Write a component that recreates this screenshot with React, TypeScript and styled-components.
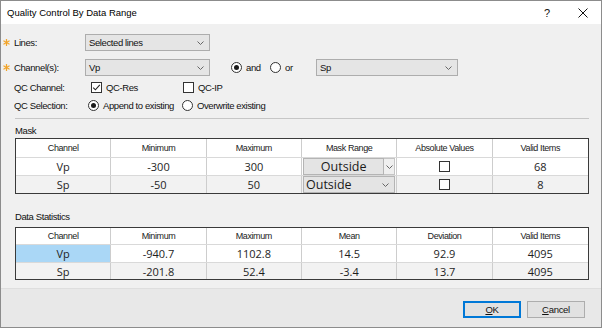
import React from "react";
import styled, { createGlobalStyle } from "styled-components";

const GlobalStyle = createGlobalStyle`
  html, body {
    margin: 0;
    padding: 0;
    background: #ffffff;
  }
  body {
    font-family: "Liberation Sans", Arial, sans-serif;
    color: #000;
  }
  * {
    box-sizing: border-box;
  }
`;

const Dialog = styled.div`
  width: 602px;
  height: 328px;
  border: 1px solid #8c8c8c;
  background: #f0f0f0;
  display: flex;
  flex-direction: column;
  overflow: hidden;
`;

const TitleBar = styled.div`
  height: 23px;
  flex: none;
  background: #ffffff;
  display: flex;
  align-items: center;
  padding-left: 6px;
  font-size: 9.5px;
`;

const Title = styled.div`
  flex: 1;
`;

const TitleButton = styled.div`
  width: 36px;
  height: 23px;
  display: flex;
  align-items: center;
  justify-content: center;
  font-size: 11px;
  color: #111;
`;

const Body = styled.div`
  flex: 1;
  padding: 10px 12px 0 2px;
  display: flex;
  flex-direction: column;
`;

const FormRow = styled.div<{ $h: number; $mt: number }>`
  display: flex;
  align-items: center;
  height: ${(p) => p.$h}px;
  margin-top: ${(p) => p.$mt}px;
`;

const StarSlot = styled.div`
  width: 11px;
  flex: none;
  display: flex;
  align-items: center;
`;

const Label = styled.div`
  width: 71px;
  flex: none;
  font-size: 9.5px;
  letter-spacing: -0.4px;
  color: #111;
`;

const Controls = styled.div<{ $pl?: number }>`
  display: flex;
  align-items: center;
  padding-left: ${(p) => p.$pl ?? 0}px;
`;

const ComboBox = styled.div<{ $w: number; $ml?: number }>`
  width: ${(p) => p.$w}px;
  height: 17px;
  margin-left: ${(p) => p.$ml ?? 0}px;
  border: 1px solid #adadad;
  background: #e5e5e5;
  display: flex;
  align-items: center;
  padding: 0 5px 0 3px;
  font-size: 9.5px;
  letter-spacing: -0.4px;
  color: #111;
`;

const ComboText = styled.span`
  flex: 1;
`;

const Choice = styled.div<{ $w: number; $ml?: number }>`
  width: ${(p) => p.$w}px;
  margin-left: ${(p) => p.$ml ?? 0}px;
  display: flex;
  align-items: center;
  gap: 4px;
  font-size: 9.5px;
  letter-spacing: -0.4px;
  color: #111;
`;

const RadioCircle = styled.span<{ $on?: boolean }>`
  width: 11px;
  height: 11px;
  flex: none;
  border-radius: 50%;
  border: 1px solid #333;
  background: #fff;
  display: inline-flex;
  align-items: center;
  justify-content: center;

  &::after {
    content: "";
    width: 5px;
    height: 5px;
    border-radius: 50%;
    background: #1a1a1a;
    display: ${(p) => (p.$on ? "block" : "none")};
  }
`;

const CheckBox = styled.span`
  width: 11px;
  height: 11px;
  flex: none;
  border: 1px solid #333;
  background: #fff;
  display: inline-flex;
  align-items: center;
  justify-content: center;
`;

const Separator = styled.div`
  margin: 6px 0 0 12px;
  height: 1px;
  background: #c6c6c6;
`;

const SectionLabel = styled.div<{ $mt: number; $mb: number }>`
  margin: ${(p) => p.$mt}px 0 ${(p) => p.$mb}px 12px;
  font-size: 9.5px;
  line-height: 12px;
  letter-spacing: -0.4px;
  color: #111;
`;

const Table = styled.div`
  margin-left: 12px;
  border: 1px solid #3a3a3a;
  background: #ffffff;
`;

const TableRow = styled.div<{ $h: number; $alt?: boolean; $last?: boolean }>`
  display: grid;
  grid-template-columns: repeat(6, 1fr);
  height: ${(p) => p.$h}px;
  background: ${(p) => (p.$alt ? "#f2f2f2" : "#ffffff")};
  border-bottom: ${(p) => (p.$last ? "none" : "1px solid #d9d9d9")};
`;

const Cell = styled.div<{ $selected?: boolean }>`
  border-right: 1px solid #cdcdcd;
  display: flex;
  align-items: center;
  justify-content: center;
  font-family: "Open Sans", "Liberation Sans", sans-serif;
  font-size: 11px;
  color: #1e1e1e;
  background: ${(p) => (p.$selected ? "#aad7f6" : "transparent")};
  overflow: hidden;

  &:last-child {
    border-right: none;
  }
`;

const HeaderCell = styled(Cell)`
  font-family: "Liberation Sans", Arial, sans-serif;
  font-size: 9px;
  letter-spacing: -0.4px;
  color: #222;
`;

const MaskCell = styled(Cell)`
  padding: 0 1px 0 1px;
  align-items: stretch;
`;

const MaskFace = styled.div<{ $split: boolean }>`
  flex: 1;
  display: flex;
  align-items: center;
  justify-content: ${(p) => (p.$split ? "center" : "flex-start")};
  padding-left: ${(p) => (p.$split ? 0 : 2)}px;
  border: 1px solid #b4b4b4;
  background: #e4e4e4;
  font-size: 12.5px;
  color: #1a1a1a;
`;

const MaskArrow = styled.div<{ $split: boolean }>`
  width: ${(p) => (p.$split ? 11 : 0)}px;
  display: flex;
  align-items: center;
  justify-content: center;
  border: ${(p) => (p.$split ? "1px solid #c4c4c4" : "none")};
  border-left: none;
  background: #efefef;
`;

const InlineChevron = styled.span`
  margin-left: auto;
  margin-right: 5px;
  display: flex;
`;

const Footer = styled.div`
  height: 39px;
  flex: none;
  background: #e8e8e8;
  border-top: 1px solid #dedede;
  display: flex;
  justify-content: flex-end;
  align-items: flex-start;
  gap: 6px;
  padding: 12px 16px 0 0;
`;

const Button = styled.div<{ $primary?: boolean }>`
  width: 58px;
  height: 17px;
  display: flex;
  align-items: center;
  justify-content: center;
  background: #e1e1e1;
  border: 1px solid ${(p) => (p.$primary ? "#0078d7" : "#adadad")};
  box-shadow: ${(p) => (p.$primary ? "inset 0 0 0 1px #0078d7" : "none")};
  font-size: 9.5px;
  letter-spacing: -0.3px;
  color: #111;

  u {
    text-decoration: underline;
  }
`;

const Chevron = () => (
  <svg width="7" height="4" viewBox="0 0 7 4">
    <polyline points="0.5,0.5 3.5,3.5 6.5,0.5" fill="none" stroke="#666" strokeWidth="1" />
  </svg>
);

const Star = () => (
  <svg width="7" height="7" viewBox="0 0 7 7">
    <g stroke="#f2a52a" strokeWidth="1.3" strokeLinecap="round">
      <line x1="3.5" y1="0.6" x2="3.5" y2="6.4" />
      <line x1="0.9" y1="2" x2="6.1" y2="5" />
      <line x1="0.9" y1="5" x2="6.1" y2="2" />
    </g>
  </svg>
);

const Tick = () => (
  <svg width="9" height="9" viewBox="0 0 9 9">
    <polyline points="1.2,4.6 3.4,6.8 7.8,1.8" fill="none" stroke="#222" strokeWidth="1.1" />
  </svg>
);

const CloseIcon = () => (
  <svg width="10" height="10" viewBox="0 0 10 10">
    <g stroke="#111" strokeWidth="1">
      <line x1="0.5" y1="0.5" x2="9.5" y2="9.5" />
      <line x1="9.5" y1="0.5" x2="0.5" y2="9.5" />
    </g>
  </svg>
);

interface Combo {
  text: string;
  split: boolean;
}

const MaskCombo = ({ text, split }: Combo) => (
  <MaskCell>
    <MaskFace $split={split}>
      {text}
      {!split && (
        <InlineChevron>
          <Chevron />
        </InlineChevron>
      )}
    </MaskFace>
    {split && (
      <MaskArrow $split={split}>
        <Chevron />
      </MaskArrow>
    )}
  </MaskCell>
);

const maskHeaders = ["Channel", "Minimum", "Maximum", "Mask Range", "Absolute Values", "Valid Items"];
const statHeaders = ["Channel", "Minimum", "Maximum", "Mean", "Deviation", "Valid Items"];

const maskRows = [
  { ch: "Vp", min: "-300", max: "300", split: true, valid: "68" },
  { ch: "Sp", min: "-50", max: "50", split: false, valid: "8" },
];

const statRows = [
  ["Vp", "-940.7", "1102.8", "14.5", "92.9", "4095"],
  ["Sp", "-201.8", "52.4", "-3.4", "13.7", "4095"],
];

export default function App() {
  return (
    <>
      <GlobalStyle />
      <Dialog>
        <TitleBar>
          <Title>Quality Control By Data Range</Title>
          <TitleButton>?</TitleButton>
          <TitleButton>
            <CloseIcon />
          </TitleButton>
        </TitleBar>

        <Body>
          <FormRow $h={17} $mt={0}>
            <StarSlot>
              <Star />
            </StarSlot>
            <Label>Lines:</Label>
            <ComboBox $w={125}>
              <ComboText>Selected lines</ComboText>
              <Chevron />
            </ComboBox>
          </FormRow>

          <FormRow $h={17} $mt={8}>
            <StarSlot>
              <Star />
            </StarSlot>
            <Label>Channel(s):</Label>
            <Controls>
              <ComboBox $w={125}>
                <ComboText>Vp</ComboText>
                <Chevron />
              </ComboBox>
              <Choice $w={39} $ml={21}>
                <RadioCircle $on />
                and
              </Choice>
              <Choice $w={46}>
                <RadioCircle />
                or
              </Choice>
              <ComboBox $w={142}>
                <ComboText>Sp</ComboText>
                <Chevron />
              </ComboBox>
            </Controls>
          </FormRow>

          <FormRow $h={14} $mt={4}>
            <StarSlot />
            <Label>QC Channel:</Label>
            <Controls $pl={6}>
              <Choice $w={92}>
                <CheckBox>
                  <Tick />
                </CheckBox>
                QC-Res
              </Choice>
              <Choice $w={60}>
                <CheckBox />
                QC-IP
              </Choice>
            </Controls>
          </FormRow>

          <FormRow $h={14} $mt={4}>
            <StarSlot />
            <Label>QC Selection:</Label>
            <Controls $pl={3}>
              <Choice $w={94}>
                <RadioCircle $on />
                Append to existing
              </Choice>
              <Choice $w={100}>
                <RadioCircle />
                Overwrite existing
              </Choice>
            </Controls>
          </FormRow>

          <Separator />

          <SectionLabel $mt={6} $mb={1}>
            Mask
          </SectionLabel>
          <Table>
            <TableRow $h={19}>
              {maskHeaders.map((h) => (
                <HeaderCell key={h}>{h}</HeaderCell>
              ))}
            </TableRow>
            {maskRows.map((r, i) => (
              <TableRow key={r.ch} $h={i === 0 ? 18 : 17} $alt={i === 1} $last={i === 1}>
                <Cell>{r.ch}</Cell>
                <Cell>{r.min}</Cell>
                <Cell>{r.max}</Cell>
                <MaskCombo text="Outside" split={r.split} />
                <Cell>
                  <CheckBox />
                </Cell>
                <Cell>{r.valid}</Cell>
              </TableRow>
            ))}
          </Table>

          <SectionLabel $mt={17} $mb={4}>
            Data Statistics
          </SectionLabel>
          <Table>
            <TableRow $h={17}>
              {statHeaders.map((h) => (
                <HeaderCell key={h}>{h}</HeaderCell>
              ))}
            </TableRow>
            {statRows.map((r, i) => (
              <TableRow key={r[0]} $h={i === 0 ? 18 : 16} $alt={i === 1} $last={i === 1}>
                {r.map((v, j) => (
                  <Cell key={j} $selected={i === 0 && j === 0}>
                    {v}
                  </Cell>
                ))}
              </TableRow>
            ))}
          </Table>
        </Body>

        <Footer>
          <Button $primary>
            <u>O</u>K
          </Button>
          <Button>
            <u>C</u>ancel
          </Button>
        </Footer>
      </Dialog>
    </>
  );
}
